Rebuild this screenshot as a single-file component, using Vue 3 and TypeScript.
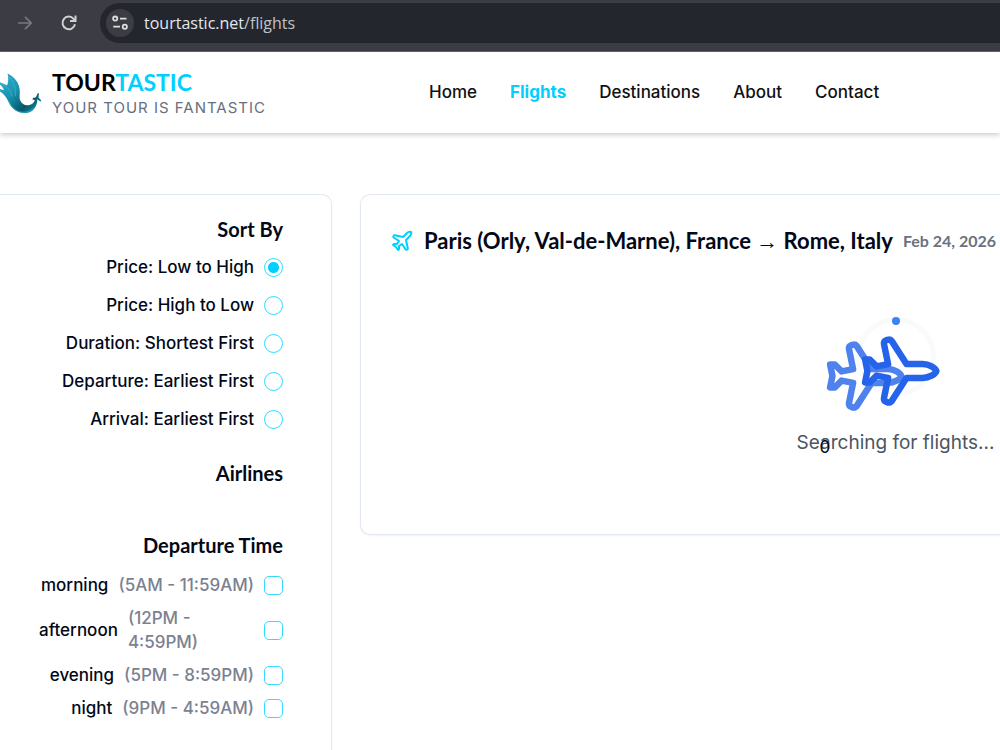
<script setup lang="ts">
import { ref } from 'vue'

interface DepartureSlot {
  id: string
  range: string
}

const planePath =
  'M17.8 19.2 16 11l3.5-3.5C21 6 21.5 4 21 3c-1-.5-3 0-4.5 1.5L13 8 4.8 6.2c-.5-.1-.9.1-1.1.5l-.3.5c-.2.5-.1 1 .3 1.3L9 12l-2 3H4l-1 1 3 2 2 3 1-1v-3l3-2 3.5 5.3c.3.4.8.5 1.3.3l.5-.2c.4-.3.6-.7.5-1.2z'

const navItems: string[] = ['Home', 'Flights', 'Destinations', 'About', 'Contact']
const activeNav = ref('Flights')

const sortOptions: string[] = [
  'Price: Low to High',
  'Price: High to Low',
  'Duration: Shortest First',
  'Departure: Earliest First',
  'Arrival: Earliest First',
]
const sortBy = ref(sortOptions[0])

const slots: DepartureSlot[] = [
  { id: 'morning', range: '(5AM - 11:59AM)' },
  { id: 'afternoon', range: '(12PM - 4:59PM)' },
  { id: 'evening', range: '(5PM - 8:59PM)' },
  { id: 'night', range: '(9PM - 4:59AM)' },
]
const selectedSlots = ref<string[]>([])
const address = ref('tourtastic.net/flights')
</script>

<template>
  <div class="page">
    <div class="browser">
      <button class="tool forward" type="button" aria-label="Forward">
        <svg width="16" height="16" viewBox="0 0 16 16" fill="none" stroke="currentColor" stroke-width="1.7">
          <path d="M1 8h13M8 1.8 14.2 8 8 14.2" />
        </svg>
      </button>
      <button class="tool reload" type="button" aria-label="Reload">
        <svg width="18" height="18" viewBox="0 0 18 18" fill="none" stroke="currentColor" stroke-width="2">
          <path d="M15 10.2A6.3 6.3 0 1 1 13.6 4.8L15.2 6.6" />
          <path d="M15.5 1.5v5.6H10" />
        </svg>
      </button>
      <div class="address">
        <button class="site-info" type="button" aria-label="Site information">
          <svg width="18" height="18" viewBox="0 0 18 18" fill="none" stroke="currentColor" stroke-width="1.8">
            <circle cx="4.2" cy="4.6" r="2.1" />
            <path d="M9 4.6h6.5M2.2 12.6H9" />
            <circle cx="13.8" cy="12.8" r="2.1" />
          </svg>
        </button>
        <label class="url">
          <span class="url-text" aria-hidden="true">tourtastic.net<span class="url-path">/flights</span></span>
          <input v-model="address" class="url-input" type="text" aria-label="Address" />
        </label>
      </div>
    </div>

    <header class="header">
      <a class="brand" href="#">
        <svg class="logo" width="42" height="44" viewBox="0 0 42 44">
          <defs>
            <linearGradient id="wing" x1="0" y1="0" x2="1" y2="1">
              <stop offset="0" stop-color="#2fb4d0" />
              <stop offset="0.4" stop-color="#1a93b0" />
              <stop offset="0.72" stop-color="#06586a" />
              <stop offset="1" stop-color="#13a3bd" />
            </linearGradient>
          </defs>
          <path
            fill="url(#wing)"
            d="M7.500 2.500C14 5.500 19 11 19.700 19c.4 5-.7 7.500.6 10.500C22 33.500 25.500 35 29.500 34c3-.7 4.500-2.500 5.300-5l-2.300-.6.4-1.300 3-.8 2-4.300 1 .4-.4 4 2.800 3.200-1 .8-3-2.200c.2 7.500-5 14-12.500 13.800C17 42 11.500 37.500 8.500 31 6.500 26.500 4 23 0 20.500v-2.500l4 1.300C3 16.500 1.500 14.500 0 13.500v-2.300l7.200 3C8.500 10.500 8.600 6.500 7.500 2.500z"
          />
          <path
            d="M1 12.500c6 3 10 7 11 13M9.500 6c5 6 6 11 6 19"
            fill="none"
            stroke="#5bd0e4"
            stroke-width="0.8"
            opacity="0.5"
          />
          <path
            d="M8.500 29.500C11.500 37 17 41.300 24 41.300c4.500 0 8-2 10-5"
            fill="none"
            stroke="#2cc0d8"
            stroke-width="1"
            opacity="0.7"
          />
        </svg>
        <span class="brand-text">
          <span class="brand-name">TOUR<span class="accent">TASTIC</span></span>
          <span class="tagline">YOUR TOUR IS FANTASTIC</span>
        </span>
      </a>
      <nav class="nav">
        <a
          v-for="item in navItems"
          :key="item"
          href="#"
          :class="['nav-link', { active: item === activeNav }]"
          @click.prevent="activeNav = item"
          >{{ item }}</a
        >
      </nav>
    </header>

    <main class="content">
      <aside class="card filters">
        <h3 class="filter-title">Sort By</h3>
        <div class="sort-list">
          <label v-for="option in sortOptions" :key="option" class="option">
            <span>{{ option }}</span>
            <input v-model="sortBy" class="radio" type="radio" name="sort" :value="option" />
          </label>
        </div>
        <h3 class="filter-title airlines">Airlines</h3>
        <h3 class="filter-title departure">Departure Time</h3>
        <div class="slot-list">
          <label v-for="slot in slots" :key="slot.id" class="option">
            <span>{{ slot.id }}</span>
            <span class="range">{{ slot.range }}</span>
            <input v-model="selectedSlots" class="checkbox" type="checkbox" :value="slot.id" />
          </label>
        </div>
      </aside>

      <section class="card results">
        <h2 class="route">
          <svg class="route-icon" width="24" height="24" viewBox="0 0 24 24">
            <path :d="planePath" />
          </svg>
          <span>Paris (Orly, Val-de-Marne), France <span class="arrow">→</span> Rome, Italy</span>
          <span class="date">Feb 24, 2026</span>
        </h2>
        <div class="loading">
          <div class="spinner">
            <span class="dot"></span>
            <svg class="plane trailing" width="78" height="78" viewBox="0 0 24 24"><path :d="planePath" /></svg>
            <svg class="plane" width="78" height="78" viewBox="0 0 24 24"><path :d="planePath" /></svg>
          </div>
          <p class="status">Searching for flights...<span class="count">0</span></p>
        </div>
      </section>
    </main>
  </div>
</template>

<style>
body {
  margin: 0;
  background: #fff;
}
</style>

<style scoped>
.page {
  display: flex;
  flex-direction: column;
  min-height: 100vh;
  overflow: hidden;
  color: #020817;
  font-family: Inter, 'Liberation Sans', sans-serif;
  font-size: 17px;
  font-weight: 500;
  line-height: 24px;
}
.page * {
  box-sizing: border-box;
}
button {
  display: flex;
  align-items: center;
  justify-content: center;
  padding: 0;
  border: 0;
  background: none;
}
.browser {
  display: flex;
  height: 52px;
  padding: 3px 0 8px 16px;
  border-bottom: 1px solid #65666a;
  background: #3b3c44;
}
.tool {
  width: 18px;
  height: 40px;
}
.forward {
  color: #797a80;
}
.reload {
  margin: 0 22px 0 26px;
  color: #cfd0d4;
}
.address {
  display: flex;
  flex: 1;
  align-items: center;
  padding-left: 6px;
  border-radius: 20px 0 0 20px;
  background: #24262e;
}
.site-info {
  width: 28px;
  height: 28px;
  border-radius: 50%;
  background: #3b3c44;
  color: #dddee2;
}
.url {
  position: relative;
  flex: 1;
  margin-left: 10px;
  color: #e6e7ea;
  font-family: 'Open Sans', 'Noto Sans', sans-serif;
  font-size: 16px;
  font-weight: 400;
}
.url-path {
  color: #c0c2c8;
}
.url-input {
  position: absolute;
  inset: 0;
  width: 100%;
  padding: 0;
  border: 0;
  outline: 0;
  background: none;
  color: transparent;
  font: inherit;
}
.header {
  display: flex;
  align-items: center;
  height: 81px;
  box-shadow: 0 2px 5px rgba(0, 0, 0, 0.2);
}
.brand {
  display: flex;
  align-items: center;
  width: 429px;
  color: #000;
  text-decoration: none;
}
.brand-text {
  display: flex;
  flex-direction: column;
  margin-left: 10px;
  padding-top: 3px;
}
.brand-name {
  font-family: Lato, sans-serif;
  font-size: 23px;
  font-weight: 700;
  line-height: 28px;
}
.accent {
  color: #00d0ff;
}
.tagline {
  color: #667080;
  font-size: 15px;
  font-weight: 400;
  letter-spacing: 1px;
}
.nav {
  display: flex;
  gap: 33px;
  padding-bottom: 2px;
}
.nav-link {
  color: #111;
  text-decoration: none;
}
.nav-link.active {
  color: #00d0ff;
  font-weight: 700;
}
.content {
  display: grid;
  flex: 1;
  grid-template-columns: 332px 1fr;
  gap: 28px;
  align-items: start;
  padding-top: 61px;
}
.card {
  border: 1px solid #e2e8f0;
  box-shadow: 0 1px 2px rgba(0, 0, 0, 0.05);
}
.filters {
  display: flex;
  flex-direction: column;
  align-items: flex-end;
  align-self: stretch;
  padding: 20px 48px 24px 0;
  border-bottom: 0;
  border-left: 0;
  border-radius: 0 10px 0 0;
}
.filter-title {
  margin: 0;
  font-family: Lato, sans-serif;
  font-size: 20px;
  font-weight: 700;
  line-height: 28px;
}
.sort-list {
  display: flex;
  flex-direction: column;
  gap: 14px;
  margin-top: 12px;
}
.airlines {
  margin-top: 28px;
}
.departure {
  margin-top: 44px;
}
.option {
  display: flex;
  align-items: center;
  justify-content: flex-end;
  gap: 10px;
}
.slot-list {
  display: flex;
  flex-direction: column;
  gap: 9px;
  width: 244px;
  margin-top: 14px;
}
.range {
  color: #7b8190;
}
.radio,
.checkbox {
  flex: none;
  width: 19px;
  height: 19px;
  margin: 0;
  border: 1px solid #36daff;
  appearance: none;
  background: #fff;
}
.radio {
  border-radius: 50%;
}
.radio:checked {
  background: radial-gradient(circle, #00d0ff 5px, #fff 6px);
}
.checkbox {
  border-radius: 5px;
}
.checkbox:checked {
  background: #00d0ff;
}
.results {
  min-height: 341px;
  padding: 30px 0 24px 29px;
  border-right: 0;
  border-radius: 10px 0 0 10px;
}
.route {
  display: flex;
  align-items: center;
  margin: 0;
  font-family: Lato, sans-serif;
  font-size: 22px;
  font-weight: 700;
  line-height: 32px;
  white-space: nowrap;
}
.route-icon {
  flex: none;
  margin-right: 10px;
  fill: none;
  stroke: #00d0ff;
  stroke-linecap: round;
  stroke-linejoin: round;
  stroke-width: 2;
}
.arrow {
  font-family: 'Liberation Serif', serif;
  font-weight: 400;
  line-height: 1;
}
.date {
  margin-left: 10px;
  color: #6b7280;
  font-size: 16px;
}
.loading {
  display: flex;
  flex-direction: column;
  align-items: center;
  width: 1011px;
  margin-top: 60px;
}
.spinner {
  position: relative;
  width: 80px;
  height: 80px;
  border: 5px solid #f8fafc;
  border-radius: 50%;
}
.dot {
  position: absolute;
  top: -5px;
  left: 31px;
  width: 8px;
  height: 8px;
  border-radius: 50%;
  background: #3b82f6;
}
.plane {
  position: absolute;
  top: 10px;
  left: -5px;
  transform: rotate(45deg);
  fill: none;
  stroke: #2563eb;
  stroke-linecap: round;
  stroke-linejoin: round;
  stroke-width: 2;
}
.plane.trailing {
  top: 15px;
  left: -40px;
  opacity: 0.8;
}
.status {
  position: relative;
  margin: 32px 0 0;
  color: #4b5563;
  font-size: 19px;
  font-weight: 400;
  line-height: 28px;
}
.count {
  position: absolute;
  top: 4px;
  left: 23px;
  color: #020817;
  font-size: 17px;
}
</style>
